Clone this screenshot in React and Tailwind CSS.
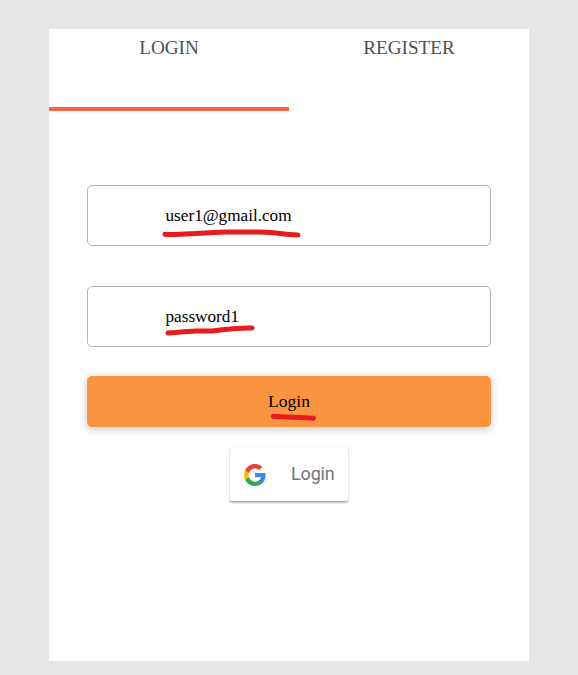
import React from 'react';

function Field({ value, stroke }) {
  return (
    <div className="relative h-[61px] rounded-[5px] border border-[#b5b5b5] bg-white">
      <span className="block pl-[77.5px] text-[17.2px] leading-[59px] text-black">{value}</span>
      <Marker d={stroke} />
    </div>
  );
}

function Marker({ d }) {
  return (
    <svg className="pointer-events-none absolute left-0 top-0 overflow-visible" width="1" height="1" fill="none" stroke="#e81c1e" strokeWidth="5" strokeLinecap="round" strokeLinejoin="round">
      <path d={d} />
    </svg>
  );
}

function GoogleLogo() {
  return (
    <svg width="22" height="22" viewBox="1 1 22 22">
      <path fill="#4285F4" d="M22.56 12.25c0-.78-.07-1.53-.2-2.25H12v4.26h5.92c-.26 1.37-1.04 2.53-2.21 3.31v2.77h3.57c2.08-1.92 3.28-4.74 3.28-8.09z" />
      <path fill="#34A853" d="M12 23c2.97 0 5.46-.98 7.28-2.66l-3.57-2.77c-.98.66-2.23 1.06-3.71 1.06-2.86 0-5.29-1.93-6.16-4.53H2.18v2.84C3.99 20.53 7.7 23 12 23z" />
      <path fill="#FBBC05" d="M5.84 14.09c-.22-.66-.35-1.36-.35-2.09s.13-1.43.35-2.09V7.07H2.18C1.43 8.55 1 10.22 1 12s.43 3.45 1.18 4.93l3.66-2.84z" />
      <path fill="#EA4335" d="M12 5.38c1.62 0 3.06.56 4.21 1.64l3.15-3.15C17.45 2.09 14.97 1 12 1 7.7 1 3.99 3.47 2.18 7.07l3.66 2.84c.87-2.6 3.3-4.53 6.16-4.53z" />
    </svg>
  );
}

export default function App() {
  return (
    <div className="h-[675px] w-[578px] bg-[#e6e6e6] px-[49px] pt-[29px] font-['Liberation_Serif',serif]">
      <main className="h-[632px] w-[480px] bg-white">
        <nav className="grid h-[82px] grid-cols-2 text-center text-[19.2px] leading-[38px] text-[#505050]">
          <div className="border-b-4 border-[#ff6347]">LOGIN</div>
          <div>REGISTER</div>
        </nav>
        <div className="flex flex-col px-[38px] pt-[74px]">
          <Field value="user1@gmail.com" stroke="M77 48.2C87 49 97 48 107 47.4C120 47 127 46 139 46C151 46 160 46 173 46C187 46.3 193 48 210 49" />
          <div className="h-10" />
          <Field value="password1" stroke="M80 46C91 45.2 98 44.4 108 44C117 44 121 44.4 129 43.5C142 42 148 40.6 164 41" />
          <button className="relative mt-[29px] h-[51px] rounded-[5px] bg-[#fb9440] text-[17.5px] leading-[51px] text-black shadow-[0_2px_8px_rgba(0,0,0,0.24)]">
            Login
            <Marker d="M186.5 40.2C198 41.3 210 41.1 226.5 42.2" />
          </button>
          <button className="mt-5 flex h-[54px] w-[118px] items-center self-center rounded-[2px] bg-white pl-[14px] shadow-[0_2px_2px_rgba(0,0,0,0.3),0_0_1px_rgba(0,0,0,0.24)]">
            <span className="mt-[2px]"><GoogleLogo /></span>
            <span className="-mt-[2px] ml-[25px] font-[Roboto,sans-serif] text-[18px] tracking-[-0.15px] text-[#757575]">Login</span>
          </button>
        </div>
      </main>
    </div>
  );
}
